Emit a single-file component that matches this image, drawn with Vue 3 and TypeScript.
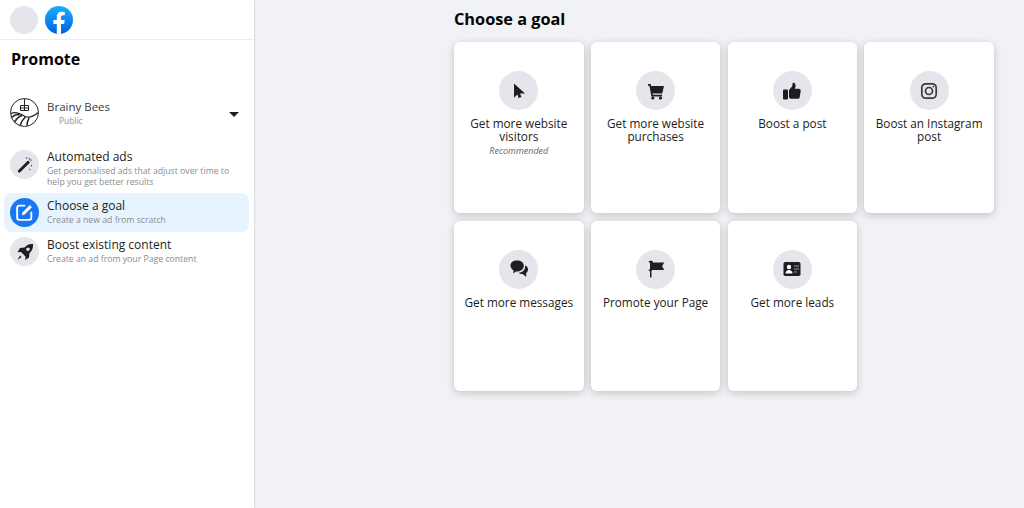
<script setup lang="ts">
interface Goal { key: string; label: string; note?: string }
const goals: Goal[] = [
  { key: 'cursor', label: 'Get more website visitors', note: 'Recommended' },
  { key: 'cart', label: 'Get more website purchases' },
  { key: 'thumb', label: 'Boost a post' },
  { key: 'insta', label: 'Boost an Instagram post' },
  { key: 'chat', label: 'Get more messages' },
  { key: 'flag', label: 'Promote your Page' },
  { key: 'lead', label: 'Get more leads' },
]
</script>

<template>
  <div class="page">
    <aside class="side">
      <header class="top">
        <span class="blank"></span>
        <svg class="fb" width="28" height="28" viewBox="0 0 29 29">
          <defs>
            <linearGradient id="fbg" x1="0" y1="0" x2="0" y2="1">
              <stop offset="0" stop-color="#19afff" />
              <stop offset="1" stop-color="#0062e0" />
            </linearGradient>
            <clipPath id="fbc"><circle cx="14.5" cy="14.5" r="14.5" /></clipPath>
          </defs>
          <circle cx="14.5" cy="14.5" r="14.5" fill="url(#fbg)" />
          <path clip-path="url(#fbc)" fill="#fff" d="M12.2 29V18.6H8.7v-4.1h3.5v-3.1c0-3.6 2.1-5.5 5.3-5.5 1.5 0 3 .3 3 .3v3.4h-1.7c-1.7 0-2.2 1-2.2 2.1v2.8h3.8l-.6 4.1h-3.2V29z" />
        </svg>
      </header>
      <h1 class="title">Promote</h1>
      <div class="page-row">
        <svg class="logo" width="29" height="29" viewBox="0 0 29 29" fill="none" stroke="#222" stroke-width="1">
          <circle cx="14.5" cy="14.5" r="14" />
          <path d="M14.500 1v6M10.500 7.500h8v5h-8zM10.500 10h8M14.500 7.500v5" />
          <path d="M1 15.500c5-2.500 10 .5 14 3 4 1.500 8 .5 13-4" stroke-width="1.300" />
          <path d="M1.500 19.500c3-2.500 6-3.500 8-2.500M4.500 24c2-3 5-6 7.500-6.500M10 27.500c1-3 3-6.500 5.500-8.500M17 27.500c0-2 1-5.500 2-7.500" stroke-width="1.600" />
        </svg>
        <div class="page-text">
          <div class="page-name">Brainy Bees</div>
          <div class="page-sub">Public</div>
        </div>
        <span class="caret"></span>
      </div>

      <nav class="menu">
        <div class="item first">
          <span class="ico">
            <svg width="20" height="20" viewBox="0 0 20 20" fill="#1c1e21">
              <path d="M13 5.400l2 2L5.200 17.200c-.5.500-1.300.500-1.800 0l-.2-.2c-.5-.5-.5-1.300 0-1.800z" />
              <path d="M11.500 1.800l.3.900.9.3-.9.300-.3.900-.3-.9-.9-.3.9-.3zM16.500 9.500l.3.9.9.3-.9.3-.3.9-.3-.9-.9-.3.9-.3zM15 13.500l.3.7.7.3-.7.3-.3.7-.3-.7-.7-.3.7-.3z" />
              <path d="M14.400 2.400l2.800 2.800-1.300 1.300-2.800-2.800z" fill="#8a8d91" />
            </svg>
          </span>
          <div class="txt">
            <div class="name">Automated ads</div>
            <div class="desc">Get personalised ads that adjust over time to help you get better results</div>
          </div>
        </div>
        <div class="item active">
          <span class="ico blue">
            <svg width="21" height="21" viewBox="0 0 20 20" fill="none" stroke="#fff" stroke-width="1.800">
              <path d="M10 3.500H5a2 2 0 0 0-2 2V15a2 2 0 0 0 2 2h9.500a2 2 0 0 0 2-2v-5" stroke-linecap="round" />
              <path d="M7.500 12.500l.6-2.600 7-7 2 2-7 7z" fill="#fff" stroke="none" />
            </svg>
          </span>
          <div class="txt">
            <div class="name">Choose a goal</div>
            <div class="desc">Create a new ad from scratch</div>
          </div>
        </div>
        <div class="item">
          <span class="ico">
            <svg width="20" height="20" viewBox="0 0 20 20" fill="#1c1e21">
              <path fill-rule="evenodd" d="M18 2c.3 3.600-.8 6.600-3.500 9l-.5 4.500-3.800 2.500.3-3.500-4.500-4.500-3.500.3L5 6l4.500-.5C11.900 2.800 14.400 1.700 18 2zM13 5.500a1.800 1.800 0 1 0 0 3.600 1.800 1.800 0 0 0 0-3.600z" />
              <path d="M5 13.500l1.500 1.500L2.500 18z" />
            </svg>
          </span>
          <div class="txt">
            <div class="name">Boost existing content</div>
            <div class="desc">Create an ad from your Page content</div>
          </div>
        </div>
      </nav>
    </aside>

    <main class="main">
      <h2 class="heading">Choose a goal</h2>
      <div class="grid">
        <article v-for="g in goals" :key="g.key" class="card">
          <span class="circle">
            <svg v-if="g.key === 'cursor'" width="20" height="20" viewBox="0 0 20 20" fill="#1c1e21">
              <path d="M5 2.500v14.300l3.300-3.300 1.500 3.500 2.700-1-1.500-3.400h5z" />
            </svg>
            <svg v-else-if="g.key === 'cart'" width="20" height="20" viewBox="0 0 20 20" fill="#1c1e21">
              <path d="M2 3h2.600l.5 2H18l-1.800 7.500H6.500l.3 1.300H16v1.700H5.400L3.400 4.700H2z" />
              <circle cx="6.800" cy="17" r="1.600" /><circle cx="14.500" cy="17" r="1.600" />
            </svg>
            <svg v-else-if="g.key === 'thumb'" width="20" height="20" viewBox="0 0 20 20" fill="#1c1e21">
              <rect x="1" y="8.500" width="5" height="10" rx="1" />
              <path d="M7 9l3-3.500c.5-.7.5-2 .6-3.500 1.800-.6 3 .8 3 2.500 0 1.200-.4 2.300-.8 3.300h4c1.200 0 2.100 1 1.900 2.100l-1 6.300c-.2 1-1 1.600-2 1.600H9c-1.200 0-2-.8-2-2z" />
            </svg>
            <svg v-else-if="g.key === 'insta'" width="20" height="20" viewBox="0 0 20 20" fill="none" stroke="#3a3b3f" stroke-width="1.700">
              <rect x="2.800" y="2.800" width="14.400" height="14.400" rx="4" />
              <circle cx="10" cy="10" r="3.500" />
              <circle cx="14.400" cy="5.600" r=".9" fill="#3a3b3f" stroke="none" />
            </svg>
            <svg v-else-if="g.key === 'chat'" width="20" height="20" viewBox="0 0 20 20" fill="#1c1e21">
              <path d="M8 1.500c3.700 0 6.800 1.800 6.800 5.200S11.700 12.500 8 12.500c-.4 0-.8 0-1.200-.1L4.500 14.500v-3.300C2.800 10.200 1.500 8.500 1.500 6.700 1.500 3.300 4.300 1.500 8 1.500z" />
              <path d="M16 6.500C17.900 7 19 8.500 19 10.500c0 1.400-.7 2.600-1.800 3.400V18l-3.300-3c-1.800.2-3.300-.4-4.300-1.200 3.700-.3 7.200-3 6.400-7.300z" />
            </svg>
            <svg v-else-if="g.key === 'flag'" width="20" height="20" viewBox="0 0 20 20" fill="#1c1e21">
              <rect x="4" y="1.500" width="1.500" height="17" rx=".5" />
              <path d="M2.800 2h3.900v1.500h11.500l-2.100 3.700 2.100 3.700H5.500v1H2.800v-1.300h1.600V3.500H2.800z" />
            </svg>
            <svg v-else width="20" height="20" viewBox="0 0 20 20">
              <rect x="1.500" y="3" width="17" height="14" rx="1.800" fill="#1c1e21" />
              <circle cx="7" cy="8" r="2.200" fill="#fff" />
              <path d="M3.500 14.500c0-2.300 1.500-3.500 3.500-3.500s3.500 1.200 3.500 3.500z" fill="#fff" />
              <path d="M12 7h5M12 10h5M12 13h3" stroke="#9a9ba0" stroke-width="1.100" />
            </svg>
          </span>
          <div class="label">{{ g.label }}</div>
          <div v-if="g.note" class="note">{{ g.note }}</div>
        </article>
      </div>
    </main>
  </div>
</template>

<style>
html, body { margin: 0; background: #f0f2f5; }
</style>

<style scoped>
.page {
  display: flex;
  height: 508px;
  overflow: hidden;
  font-family: "Open Sans", "Noto Sans", sans-serif;
  color: #1c1e21;
  background: #f0f2f5;
}
.side {
  width: 254px;
  flex: none;
  background: #fff;
  box-shadow: 0 0 2px rgba(0, 0, 0, .25);
}
.top {
  height: 40px;
  box-sizing: border-box;
  display: flex;
  align-items: center;
  gap: 6.500px;
  padding: 0 10px;
  border-bottom: 1px solid #ebecee;
}
.blank {
  width: 28px;
  height: 28px;
  border-radius: 50%;
  background: #e4e6eb;
}
.fb { flex: none; }
.title {
  margin: 0;
  padding: 9px 11px 0;
  height: 50px;
  box-sizing: border-box;
  font-size: 16px;
  line-height: 20px;
  font-weight: 700;
  color: #050505;
}
.page-row {
  display: flex;
  align-items: center;
  padding: 8px 10px 0;
  height: 29px;
}
.logo { flex: none; }
.page-text { margin-left: 8px; flex: 1; margin-top: 2px; }
.page-name { font-size: 11.500px; line-height: 14px; color: #3a3b3c; }
.page-sub { font-size: 8.400px; line-height: 13px; color: #8a8d91; padding-left: 12px; }
.caret {
  width: 0;
  height: 0;
  margin: 4px 5px 0 0;
  border-left: 5px solid transparent;
  border-right: 5px solid transparent;
  border-top: 5.500px solid #1c1e21;
}
.menu { padding: 19px 5px 0 4px; }
.item {
  display: flex;
  gap: 8px;
  padding: 5px 6px;
  height: 39.500px;
  box-sizing: border-box;
  border-radius: 8px;
  align-items: center;
}
.item.first {
  height: 46.500px;
  padding: 4px 6px 0;
  align-items: flex-start;
}
.item.active { background: #e7f3ff; }
.ico {
  width: 29px;
  height: 29px;
  flex: none;
  border-radius: 50%;
  background: #e4e6eb;
  display: flex;
  align-items: center;
  justify-content: center;
}
.ico.blue { background: #1877f2; }
.txt { min-width: 0; }
.name { font-size: 12px; line-height: 14px; color: #1c1e21; }
.desc { font-size: 8.700px; line-height: 11px; color: #8a8d91; margin-top: 2px; }
.main { flex: 1; padding: 9px 0 0 200px; }
.heading {
  margin: 0 0 13px;
  font-size: 16.300px;
  line-height: 20px;
  font-weight: 700;
  color: #050505;
}
.grid {
  display: grid;
  grid-template-columns: repeat(4, 129.600px);
  grid-auto-rows: 170.500px;
  column-gap: 7.200px;
  row-gap: 8px;
}
.card {
  background: #fff;
  border-radius: 6px;
  box-shadow: 0 2px 8px rgba(0, 0, 0, .2);
  padding: 29px 4px 0;
  box-sizing: border-box;
  text-align: center;
}
.circle {
  width: 39px;
  height: 39px;
  border-radius: 50%;
  background: #e4e6eb;
  margin: 0 auto 7px;
  display: flex;
  align-items: center;
  justify-content: center;
}
.label { font-size: 11.750px; line-height: 13px; color: #1c1e21; padding: 0 4px; }
.note { font-size: 9px; line-height: 12px; font-style: italic; color: #65676b; margin-top: 2px; }
</style>
